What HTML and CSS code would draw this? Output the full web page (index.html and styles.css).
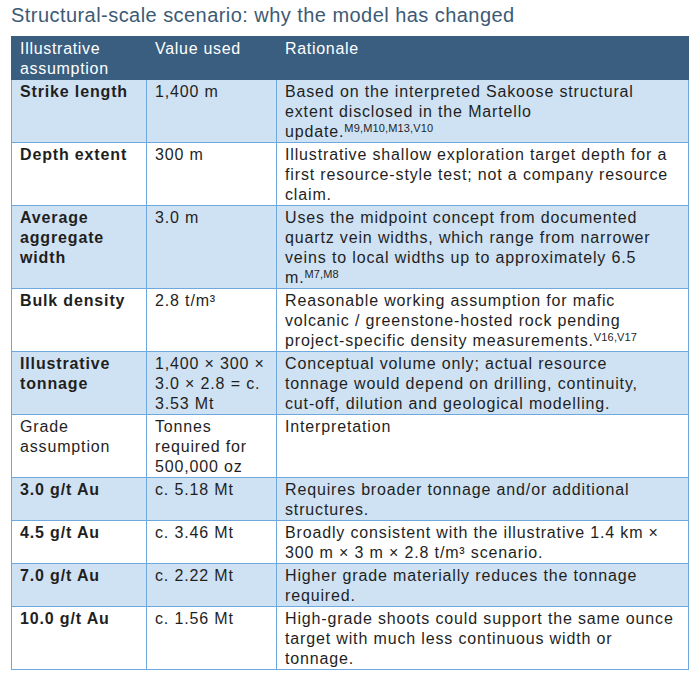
FILE: index.html
```html
<!DOCTYPE html>
<html>
<head>
<meta charset="utf-8">
<link rel="stylesheet" href="styles.css">
</head>
<body>
<h2 class="title">Structural-scale scenario: why the model has changed</h2>
<table class="grid">
  <colgroup>
    <col class="c1"><col class="c2"><col class="c3">
  </colgroup>
  <thead>
    <tr>
      <th class="h1">Illustrative assumption</th>
      <th class="h2">Value used</th>
      <th class="h3">Rationale</th>
    </tr>
  </thead>
  <tbody>
    <tr class="alt">
      <td class="b">Strike length</td>
      <td>1,400 m</td>
      <td>Based on the interpreted Sakoose structural extent disclosed in the Martello update.<sup>M9,M10,M13,V10</sup></td>
    </tr>
    <tr>
      <td class="b">Depth extent</td>
      <td>300 m</td>
      <td>Illustrative shallow exploration target depth for a first resource-style test; not a company resource claim.</td>
    </tr>
    <tr class="alt">
      <td class="b">Average aggregate width</td>
      <td>3.0 m</td>
      <td>Uses the midpoint concept from documented quartz vein widths, which range from narrower veins to local widths up to approximately 6.5 m.<sup>M7,M8</sup></td>
    </tr>
    <tr>
      <td class="b">Bulk density</td>
      <td>2.8 t/m³</td>
      <td>Reasonable working assumption for mafic volcanic / greenstone-hosted rock pending project-specific density measurements.<sup>V16,V17</sup></td>
    </tr>
    <tr class="alt">
      <td class="b">Illustrative tonnage</td>
      <td>1,400 × 300 × 3.0 × 2.8 = c. 3.53 Mt</td>
      <td>Conceptual volume only; actual resource<br>tonnage would depend on drilling, continuity, <span class="nw">cut-off,</span> dilution and geological modelling.</td>
    </tr>
    <tr>
      <td>Grade assumption</td>
      <td>Tonnes required for 500,000 oz</td>
      <td>Interpretation</td>
    </tr>
    <tr class="alt">
      <td class="b">3.0 g/t Au</td>
      <td>c. 5.18 Mt</td>
      <td>Requires broader tonnage and/or additional structures.</td>
    </tr>
    <tr>
      <td class="b">4.5 g/t Au</td>
      <td>c. 3.46 Mt</td>
      <td>Broadly consistent with the illustrative 1.4 km × 300 m × 3 m × 2.8 t/m³ scenario.</td>
    </tr>
    <tr class="alt">
      <td class="b">7.0 g/t Au</td>
      <td>c. 2.22 Mt</td>
      <td>Higher grade materially reduces the tonnage required.</td>
    </tr>
    <tr>
      <td class="b">10.0 g/t Au</td>
      <td>c. 1.56 Mt</td>
      <td>High-grade shoots could support the same ounce target with much less continuous width or tonnage.</td>
    </tr>
  </tbody>
</table>
</body>
</html>
```

FILE: styles.css
```css
html, body {
  margin: 0;
  padding: 0;
  background: #ffffff;
}
body {
  padding: 0 0 0 11px;
  font-family: "Liberation Sans", Arial, sans-serif;
  color: #1f1f1f;
}
.title {
  margin: 0 0 9px 0;
  padding-top: 3px;
  font-size: 20px;
  line-height: 24px;
  font-weight: normal;
  letter-spacing: 0.45px;
  color: #3d5a75;
}
.grid {
  border-collapse: collapse;
  table-layout: fixed;
  width: 677px;
  font-size: 16px;
  line-height: 20px;
  letter-spacing: 0.85px;
}
.c1 { width: 135px; }
.c2 { width: 130px; }
.c3 { width: 412px; }
.grid th {
  background: #3a5e7f;
  color: #ffffff;
  font-weight: normal;
  text-align: left;
  vertical-align: top;
  padding: 2px 8px 0 8px;
  border: 1px solid #3a5e7f;
  height: 42px;
  box-sizing: border-box;
  letter-spacing: 0.7px;
}
.grid th.h3 {
  border-left: 1px solid #7d98b1;
}
.grid td {
  vertical-align: top;
  padding: 2px 8px 0 8px;
  border: 1px solid #6fa8dc;
}
.grid tr.alt td {
  background: #cfe2f3;
}
.grid td.b {
  font-weight: bold;
}
.grid .nw {
  white-space: nowrap;
}
.grid sup {
  font-size: 11px;
  line-height: 0;
  letter-spacing: 0.15px;
  vertical-align: 5px;
}
```
